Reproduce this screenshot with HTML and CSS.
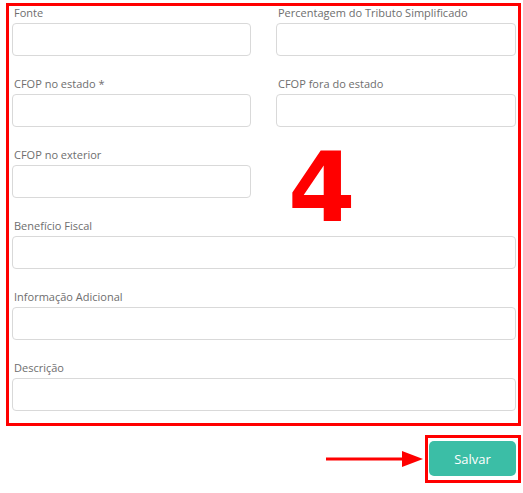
FILE: index.html
```html
<!DOCTYPE html>
<html lang="pt-BR">
<head>
    <meta charset="UTF-8">
    <meta name="viewport" content="width=device-width, initial-scale=1.0">
    <title>Tributo</title>
    <link rel="stylesheet" href="styles.css">
</head>
<body>

    <!-- Form area (highlighted) -->
    <div class="form-box">
        <div class="grid">
            <div class="field">
                <label for="fonte">Fonte</label>
                <input type="text" id="fonte">
            </div>
            <div class="field">
                <label for="percentagem">Percentagem do Tributo Simplificado</label>
                <input type="text" id="percentagem">
            </div>
            <div class="field">
                <label for="cfop_estado">CFOP no estado *</label>
                <input type="text" id="cfop_estado">
            </div>
            <div class="field">
                <label for="cfop_fora">CFOP fora do estado</label>
                <input type="text" id="cfop_fora">
            </div>
            <div class="field">
                <label for="cfop_exterior">CFOP no exterior</label>
                <input type="text" id="cfop_exterior">
            </div>
            <div class="field step-cell">
                <span class="step">4</span>
            </div>
            <div class="field wide">
                <label for="beneficio">Benefício Fiscal</label>
                <input type="text" id="beneficio">
            </div>
            <div class="field wide">
                <label for="informacao">Informação Adicional</label>
                <input type="text" id="informacao">
            </div>
            <div class="field wide">
                <label for="descricao">Descrição</label>
                <input type="text" id="descricao">
            </div>
        </div>
    </div>

    <!-- Save button -->
    <div class="footer">
        <svg class="arrow" width="97" height="16" viewBox="0 0 97 16">
            <rect x="0" y="6.5" width="78" height="3" fill="#ff0000"/>
            <polygon points="76,0 97,8 76,16" fill="#ff0000"/>
        </svg>
        <div class="button-box">
            <button class="save-button">Salvar</button>
        </div>
    </div>

</body>
</html>
```

FILE: styles.css
```css
body {
    font-family: "Open Sans", Arial, sans-serif;
    background-color: #ffffff;
    margin: 0;
    width: 523px;
}

.form-box {
    margin: 3px 2px 0 6px;
    border: 3px solid #ff0000;
    padding: 0 3px 12px 3px;
}

.grid {
    display: grid;
    grid-template-columns: 239px 240px;
    column-gap: 25px;
    row-gap: 21px;
}

.field {
    display: flex;
    flex-direction: column;
}

.field.wide {
    grid-column: 1 / 3;
}

label {
    display: block;
    font-size: 11px;
    line-height: 14px;
    color: #6e6e6e;
    margin-bottom: 3px;
    padding-left: 2px;
}

input[type="text"] {
    height: 33px;
    width: 100%;
    border: 1px solid #d9d9d9;
    border-radius: 4px;
    box-sizing: border-box;
    background: #ffffff;
}

/* Step marker */
.step-cell {
    position: relative;
}

.step {
    position: absolute;
    left: 12px;
    top: -9px;
    font-family: "DejaVu Sans", sans-serif;
    font-weight: bold;
    font-size: 97px;
    line-height: 97px;
    color: #ff0000;
}

/* Footer */
.footer {
    display: flex;
    justify-content: flex-end;
    align-items: center;
    gap: 2px;
    margin-top: 9px;
    padding-right: 2px;
}

.arrow {
    display: block;
}

.button-box {
    border: 3px solid #ff0000;
    padding: 3px 2px 4px 1px;
}

.save-button {
    display: block;
    width: 87px;
    height: 35px;
    background-color: #3bbea6;
    border: none;
    border-radius: 5px;
    color: white;
    font-family: "Open Sans", Arial, sans-serif;
    font-size: 13px;
    cursor: pointer;
}
```
